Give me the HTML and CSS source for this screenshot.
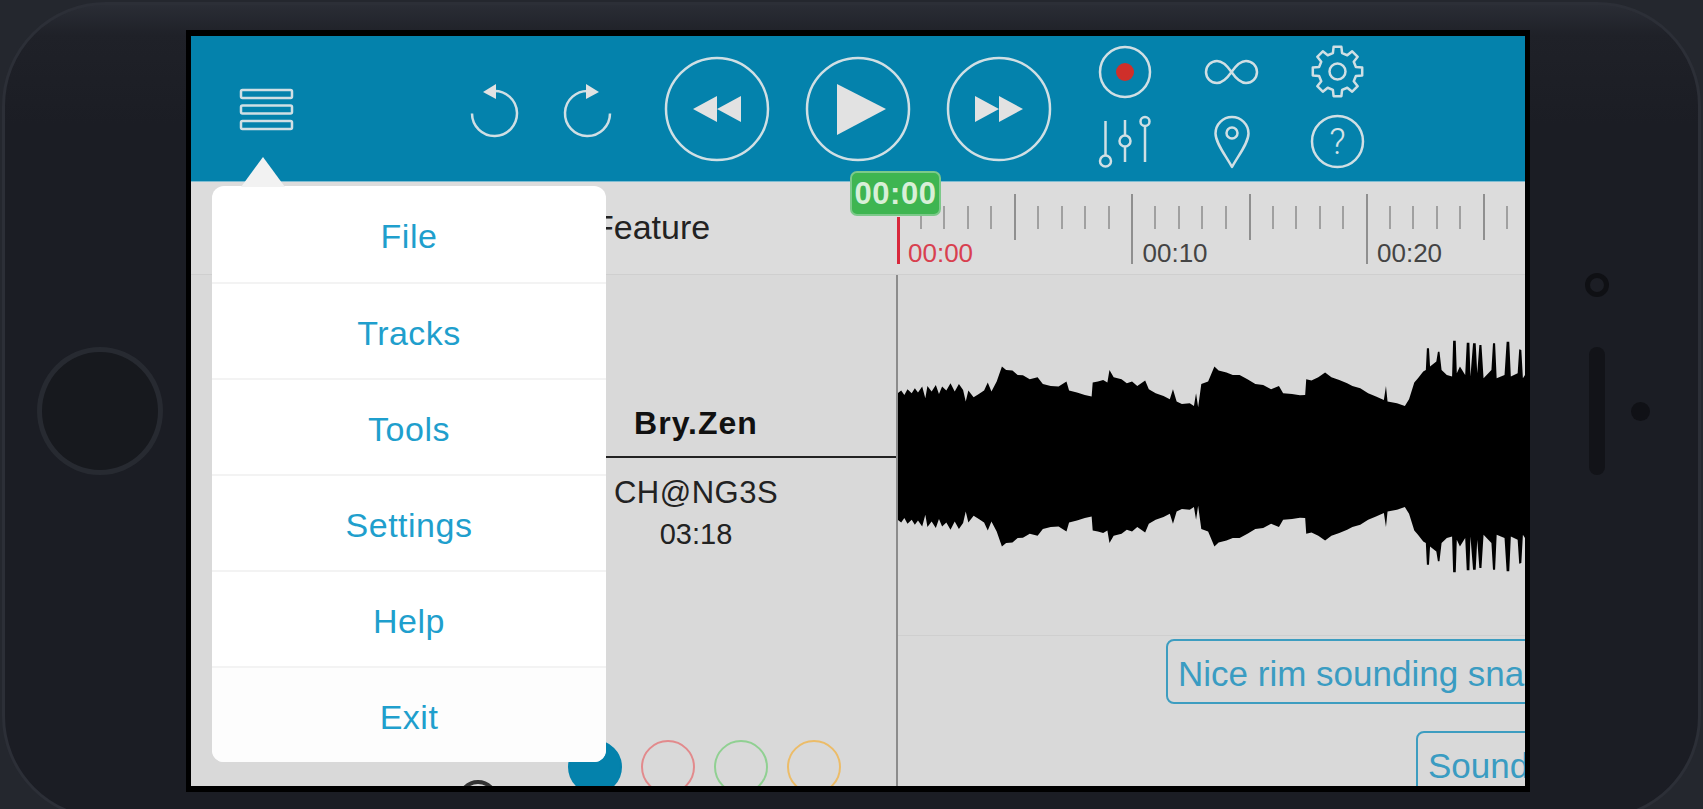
FILE: index.html
```html
<!DOCTYPE html>
<html>

<head>
    <meta charset="UTF-8">
    <title>Track Editor</title>
    <link rel="stylesheet" href="styles.css">
</head>

<body>
    <div class="phone">
        <div class="bezel-left">
            <div class="home-button"></div>
        </div>

        <div class="screen">
            <div class="toolbar">
                <svg class="icon menu-icon" width="53" height="41" viewBox="0 0 53 41">
                    <rect x="1" y="1" width="51" height="8" rx="1.5"></rect>
                    <rect x="1" y="16.5" width="51" height="8" rx="1.5"></rect>
                    <rect x="1" y="32" width="51" height="8" rx="1.5"></rect>
                </svg>
                <svg class="icon undo-icon" width="46" height="52" viewBox="0 0 46 52">
                    <path d="M1 29.500A22.500 22.500 0 1 0 22 7"></path>
                    <path class="solid" d="M12 8L25 0V15Z"></path>
                </svg>
                <svg class="icon redo-icon" width="46" height="52" viewBox="0 0 46 52">
                    <path d="M45 29.500A22.500 22.500 0 1 1 24 7"></path>
                    <path class="solid" d="M34 8L21 0V15Z"></path>
                </svg>
                <div class="transport">
                    <svg class="icon" width="104" height="104" viewBox="0 0 104 104">
                        <circle cx="52" cy="52" r="51"></circle>
                        <path class="solid" d="M28 52L52 39V65ZM52 52L76 39V65Z"></path>
                    </svg>
                    <svg class="icon" width="104" height="104" viewBox="0 0 104 104">
                        <circle cx="52" cy="52" r="51"></circle>
                        <path class="solid" d="M31 27L80 52L31 78Z"></path>
                    </svg>
                    <svg class="icon" width="104" height="104" viewBox="0 0 104 104">
                        <circle cx="52" cy="52" r="51"></circle>
                        <path class="solid" d="M28 39L52 52L28 65ZM52 39L76 52L52 65Z"></path>
                    </svg>
                </div>
                <div class="tool-grid">
                    <svg class="icon" width="54" height="52" viewBox="0 0 54 52">
                        <circle cx="27" cy="26" r="25"></circle>
                        <circle class="rec-dot" cx="27" cy="26" r="9"></circle>
                    </svg>
                    <svg class="icon" width="53" height="52" viewBox="0 0 53 25">
                        <path d="M26.5 12.5C22 6 17 1.5 12 1.5a11 11 0 0 0 0 22c5 0 10-4.5 14.5-11s9.500-11 14.500-11a11 11 0 0 1 0 22c-5 0-10-4.500-14.500-11z"></path>
                    </svg>
                    <svg class="icon" width="53" height="53" viewBox="-26.500 -26.500 53 53">
                        <path d="M-4.600-18.400L-3.900-24.700L3.900-24.700L4.600-18.400L9.760-16.260L14.700-20.200L20.200-14.700L16.260-9.760L18.400-4.600L24.700-3.900L24.700 3.900L18.400 4.600L16.260 9.760L20.200 14.700L14.700 20.200L9.760 16.260L4.600 18.400L3.900 24.700L-3.900 24.700L-4.600 18.400L-9.760 16.260L-14.700 20.200L-20.200 14.700L-16.260 9.760L-18.400 4.600L-24.700 3.900L-24.700-3.900L-18.400-4.600L-16.260-9.760L-20.200-14.700L-14.700-20.200L-9.760-16.260Z"></path>
                        <circle cx="0" cy="0" r="8"></circle>
                    </svg>
                    <svg class="icon" width="54" height="52" viewBox="0 0 54 52">
                        <path d="M7.500 5V39M27 4V19M27 31V46M47 11V46"></path>
                        <circle cx="7.500" cy="45" r="5.500"></circle>
                        <circle cx="27" cy="25" r="5.500"></circle>
                        <circle cx="47" cy="5.500" r="4.500"></circle>
                    </svg>
                    <svg class="icon" width="36" height="52" viewBox="0 0 36 52">
                        <path d="M18 51C12 40 1.500 27 1.500 17.500A16.500 16.500 0 0 1 34.500 17.500C34.500 27 24 40 18 51Z"></path>
                        <circle cx="18" cy="17" r="5.500"></circle>
                    </svg>
                    <svg class="icon" width="53" height="53" viewBox="0 0 53 53">
                        <circle cx="26.500" cy="26.500" r="25.500"></circle>
                        <text class="help-mark" x="26.500" y="39" text-anchor="middle">?</text>
                    </svg>
                </div>
            </div>

            <div class="ruler-row">
                <div class="title-cell">Feature</div>
                <div class="ruler">
                    <svg class="ticks" width="627" height="93" viewBox="0 0 627 93">
                        <path class="minor" d="M23 24V47M46 24V47M70 24V47M93 24V47M140 24V47M164 24V47M187 24V47M211 24V47M257 24V47M281 24V47M304 24V47M328 24V47M375 24V47M398 24V47M422 24V47M445 24V47M492 24V47M515 24V47M539 24V47M562 24V47M609 24V47"></path>
                        <path class="major" d="M117 12V58M234 12V82M352 12V58M469 12V82M586 12V58"></path>
                    </svg>
                    <div class="ruler-labels">
                        <span class="ruler-label start">00:00</span>
                        <span class="ruler-label">00:10</span>
                        <span class="ruler-label">00:20</span>
                    </div>
                </div>
            </div>

            <div class="workspace">
                <div class="track-col">
                    <div class="track-head">
                        <div class="track-name">Bry.Zen</div>
                    </div>
                    <div class="track-song">CH@NG3S</div>
                    <div class="track-time">03:18</div>
                    <div class="track-foot">
                        <div class="strip-dot"></div>
                        <div class="colour-strip"></div>
                        <div class="knob"></div>
                        <div class="swatches">
                            <div class="swatch blue"></div>
                            <div class="swatch red"></div>
                            <div class="swatch green"></div>
                            <div class="swatch orange"></div>
                        </div>
                    </div>
                </div>
                <div class="wave-col">
                    <div class="wave-area">
                        <svg class="wave" viewBox="32 0 1197 820" preserveAspectRatio="none">
                            <path id="wave-half" d="M32 222L40 212 46 225 52 208 60 220 66 205 72 218 80 200 86 235 90 198 98 215 106 195 112 222 118 200 126 212 134 190 142 215 150 192 158 210 163 245 168 212 178 232 188 222 198 212 205 188 212 215 222 185 232 140 240 150 252 152 262 165 272 166 285 178 300 172 310 192 325 198 340 200 355 185 360 212 375 218 390 225 403 230 405 188 415 185 425 180 433 188 437 150 445 172 460 178 470 190 480 185 490 198 505 182 512 208 525 220 540 228 552 238 558 208 565 245 575 252 590 250 598 258 602 220 606 262 612 192 625 185 637 140 645 152 660 158 672 165 685 165 700 178 715 192 730 195 745 208 760 198 768 220 785 222 800 226 810 225 812 178 822 182 835 172 848 158 860 172 875 180 890 190 900 198 915 205 930 220 945 230 960 240 964 198 967 245 985 250 1000 258 1008 238 1018 188 1025 175 1035 155 1040 150 1042 85 1046 85 1048 140 1060 125 1063 95 1066 95 1070 150 1080 165 1090 170 1092 62 1097 62 1099 160 1105 140 1115 165 1118 68 1123 68 1125 170 1130 70 1135 70 1138 160 1142 75 1146 75 1150 175 1165 150 1168 70 1172 70 1175 175 1190 165 1194 65 1199 65 1202 170 1215 160 1218 88 1222 90 1225 175 1229 165V430H32Z"></path>
                            <use href="#wave-half" transform="translate(0 820) scale(1 -1)"></use>
                        </svg>
                    </div>
                    <div class="marker first">Nice rim sounding snare hit</div>
                    <div class="marker second">Sound effect</div>
                </div>
            </div>

            <!-- things lying over the screen -->
            <div class="time-badge">00:00</div>
            <div class="playhead"></div>
            <div class="popover">
                <div class="popover-item">File</div>
                <div class="popover-item">Tracks</div>
                <div class="popover-item">Tools</div>
                <div class="popover-item">Settings</div>
                <div class="popover-item">Help</div>
                <div class="popover-item">Exit</div>
            </div>
        </div>

        <div class="bezel-right">
            <div class="speaker-col">
                <div class="camera"></div>
                <div class="speaker"></div>
            </div>
            <div class="sensor"></div>
        </div>
    </div>
</body>

</html>
```

FILE: styles.css
```css
html,
body {
    margin: 0;
    height: 809px;
    overflow: hidden;
}

body {
    background-color: #24272e;
    font-family: "Liberation Sans", Arial, sans-serif;
}

.phone {
    box-sizing: border-box;
    width: 1699px;
    height: 818px;
    margin: 2px 2px 0;
    display: flex;
    align-items: center;
    background-color: #1b1d24;
    background-image: linear-gradient(#2a2d35, #1f2128 30px, #1b1d24 120px);
    border: 3px solid #2c2f37;
    border-radius: 104px;
}

.bezel-left {
    width: 181px;
    padding-left: 32px;
    box-sizing: border-box;
}

.home-button {
    box-sizing: border-box;
    width: 126px;
    height: 128px;
    border: 5px solid #272a31;
    border-radius: 50%;
    background-color: #17191e;
}

.bezel-right {
    flex: 1;
    display: flex;
    align-items: center;
    padding-left: 55px;
    gap: 22px;
}

.speaker-col {
    display: flex;
    flex-direction: column;
    align-items: center;
    padding-bottom: 74px;
}

.camera {
    box-sizing: border-box;
    width: 24px;
    height: 24px;
    margin-bottom: 50px;
    border: 5px solid #0f1014;
    border-radius: 50%;
    background-color: #1c1e25;
}

.speaker {
    width: 16px;
    height: 128px;
    border-radius: 8px;
    background-color: #121318;
}

.sensor {
    width: 19px;
    height: 19px;
    border-radius: 50%;
    background-color: #101116;
}

.screen {
    position: relative;
    flex: none;
    width: 1334px;
    height: 750px;
    border: solid #000;
    border-width: 6px 5px;
    display: flex;
    flex-direction: column;
    overflow: hidden;
    background-color: #d9d9d9;
}

/* top bar */
.toolbar {
    flex: none;
    box-sizing: border-box;
    height: 146px;
    padding-left: 49px;
    display: flex;
    align-items: flex-start;
    background-color: #0482ac;
    border-bottom: 1px solid #7fbdd2;
}

.icon {
    display: block;
    flex: none;
    overflow: visible;
    fill: none;
    stroke: #d0dfe4;
    stroke-width: 2.500;
    stroke-linejoin: round;
}

.icon .solid {
    fill: #e2e2e2;
    stroke: none;
}

.icon .rec-dot {
    fill: #cf2f2a;
    stroke: none;
}

.help-mark {
    fill: #d6e2e6;
    stroke: none;
    font-family: Roboto, sans-serif;
    font-weight: 300;
    font-size: 36px;
}

.menu-icon {
    margin-top: 53px;
}

.undo-icon {
    margin: 48px 0 0 178px;
}

.redo-icon {
    margin: 48px 0 0 48px;
}

.transport {
    margin: 21px 0 0 54px;
    display: flex;
    gap: 37px;
}

.tool-grid {
    margin: 9px 0 0 47px;
    display: grid;
    grid-template-columns: 54px 53px 53px;
    column-gap: 53px;
    row-gap: 17px;
    justify-items: center;
    align-items: center;
}

/* timeline */
.ruler-row {
    flex: none;
    height: 93px;
    display: flex;
    background-color: #dcdcdc;
    border-bottom: 1px solid #cfcfcf;
    box-sizing: border-box;
}

.title-cell {
    flex: none;
    box-sizing: border-box;
    width: 707px;
    padding: 26px 0 0 402px;
    font-size: 34px;
    color: #222;
}

.ruler {
    position: relative;
    flex: 1;
}

.ticks {
    display: block;
}

.minor,
.major {
    fill: none;
    stroke: #a0a0a0;
    stroke-width: 2;
}

.major {
    stroke: #8f8f8f;
}

.ruler-labels {
    position: absolute;
    top: 56px;
    left: 10px;
    display: flex;
}

.ruler-label {
    width: 234.500px;
    font-size: 26px;
    line-height: 30px;
    color: #444;
}

.ruler-label.start {
    color: #d8404f;
}

/* tracks */
.workspace {
    flex: 1;
    display: flex;
    min-height: 0;
}

.track-col {
    flex: none;
    box-sizing: border-box;
    width: 707px;
    padding-left: 305px;
    border-right: 2px solid #8c8c8c;
    display: flex;
    flex-direction: column;
}

.track-head {
    height: 181px;
    display: flex;
    align-items: flex-end;
    justify-content: center;
    border-bottom: 2px solid #222;
}

.track-name {
    margin-bottom: 14px;
    font-size: 32px;
    font-weight: bold;
    letter-spacing: 1px;
    color: #111;
}

.track-song {
    margin-top: 17px;
    font-size: 31px;
    line-height: 36px;
    letter-spacing: 0.500px;
    text-align: center;
    color: #222;
}

.track-time {
    margin-top: 5px;
    font-size: 29px;
    line-height: 36px;
    text-align: center;
    color: #222;
}

.track-foot {
    position: absolute;
    left: 0;
    bottom: 0;
    width: 705px;
    height: 46px;
}

.strip-dot {
    position: absolute;
    left: 52px;
    top: 0;
    width: 5px;
    height: 4px;
    background-color: #111;
}

.colour-strip {
    position: absolute;
    left: 79px;
    top: 0;
    width: 169px;
    height: 3px;
    background-image: linear-gradient(90deg, #5b4a78, #6a8ab8 40%, #7a5a88 75%, #a08acb);
}

.knob {
    position: absolute;
    left: 267px;
    top: 40px;
    box-sizing: border-box;
    width: 40px;
    height: 40px;
    border: 4px solid #333;
    border-radius: 50%;
}

.swatches {
    position: absolute;
    left: 377px;
    top: 0;
    display: flex;
    gap: 19px;
}

.swatch {
    box-sizing: border-box;
    width: 54px;
    height: 54px;
    border: 2px solid;
    border-radius: 50%;
}

.swatch.blue {
    background-color: #0482ac;
    border-color: #0482ac;
}

.swatch.red {
    border-color: #e28a8c;
}

.swatch.green {
    border-color: #90d092;
}

.swatch.orange {
    border-color: #ecbc68;
}

.wave-col {
    flex: 1;
    min-width: 0;
    overflow: hidden;
}

.wave-area {
    height: 361px;
    padding-top: 45px;
    box-sizing: border-box;
    border-bottom: 1px solid #cfcfcf;
}

.wave {
    display: block;
    width: 628px;
    height: 273px;
    margin-left: -1px;
    fill: #000;
}

.marker {
    box-sizing: border-box;
    width: max-content;
    height: 65px;
    padding: 3px 10px 0;
    font-size: 35px;
    line-height: 60px;
    white-space: nowrap;
    color: #3a9cc2;
    border: 2.500px solid #3d9dc0;
    border-radius: 8px;
}

.marker.first {
    margin: 3px 0 0 268px;
}

.marker.second {
    margin: 27px 0 0 518px;
}

/* overlays */
.time-badge {
    position: absolute;
    left: 659px;
    top: 135px;
    box-sizing: border-box;
    width: 91px;
    height: 45px;
    font-size: 31px;
    font-weight: bold;
    line-height: 41px;
    letter-spacing: 0.500px;
    text-align: center;
    color: #d8efd8;
    background-color: #3eb551;
    border: 2px solid #7cc98a;
    border-radius: 7px;
}

.playhead {
    position: absolute;
    left: 706px;
    top: 181px;
    width: 3px;
    height: 47px;
    background-color: #d8283c;
}

.popover {
    position: absolute;
    left: 21px;
    top: 150px;
    width: 394px;
    height: 576px;
    display: flex;
    flex-direction: column;
    background-color: #fff;
    border-radius: 12px;
}

.popover::before {
    content: "";
    position: absolute;
    left: 29px;
    top: -29px;
    width: 44px;
    height: 30px;
    background-color: #f2f2f2;
    clip-path: polygon(50% 0, 100% 100%, 0 100%);
}

.popover-item {
    box-sizing: border-box;
    flex: none;
    height: 96px;
    display: flex;
    align-items: center;
    justify-content: center;
    padding-top: 5px;
    font-size: 34px;
    letter-spacing: 0.500px;
    color: #1f9fcd;
    border-bottom: 2px solid #f3f3f3;
}

.popover-item:first-child {
    height: 98px;
}

.popover-item:last-child {
    flex: 1;
    height: auto;
    border-bottom: 0;
    background-color: #fdfdfd;
    border-radius: 0 0 12px 12px;
}
```
